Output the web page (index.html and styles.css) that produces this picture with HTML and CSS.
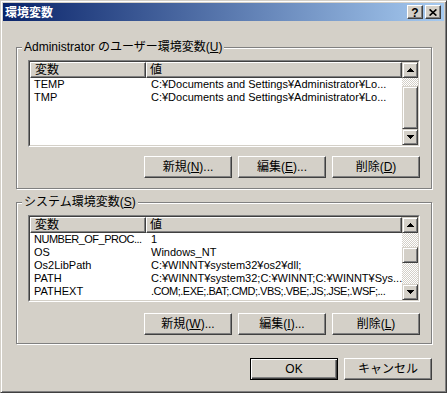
FILE: index.html
```html
<!DOCTYPE html>
<html lang="ja">
<head>
    <meta charset="UTF-8">
    <meta name="viewport" content="width=device-width, initial-scale=1.0">
    <title>環境変数</title>
    <link rel="stylesheet" href="styles.css">
</head>
<body>

    <div class="window">
        <div class="titlebar">
            <span class="title">環境変数</span>
            <div class="caption-buttons">
                <span class="cap-btn help">?</span>
                <span class="cap-btn">
                    <svg width="8" height="7" viewBox="0 0 8 7"><path d="M0.6 0.4l6.8 6.2M7.4 0.4l-6.8 6.2" stroke="#000" stroke-width="1.6" fill="none"/></svg>
                </span>
            </div>
        </div>

        <div class="content">
            <fieldset class="group">
                <legend>Administrator のユーザー環境変数(<u>U</u>)</legend>
                <div class="list">
                    <div class="list-inner">
                        <div class="list-main">
                            <div class="list-head">
                                <span class="head-cell name">変数</span>
                                <span class="head-cell value">値</span>
                            </div>
                            <div class="row"><span class="cell-name">TEMP</span><span class="cell-value">C:¥Documents and Settings¥Administrator¥Lo...</span></div>
                            <div class="row"><span class="cell-name">TMP</span><span class="cell-value">C:¥Documents and Settings¥Administrator¥Lo...</span></div>
                        </div>
                        <div class="scrollbar">
                            <span class="sb-btn">
                                <svg width="7" height="4" viewBox="0 0 7 4"><path d="M3 0h1v1h1v1h1v1h1v1H0V3h1V2h1V1h1z"/></svg>
                            </span>
                            <span class="sb-track user-top"></span>
                            <span class="sb-thumb user-thumb"></span>
                            <span class="sb-track fill"></span>
                            <span class="sb-btn">
                                <svg width="7" height="4" viewBox="0 0 7 4"><path d="M0 0h7v1H6v1H5v1H4v1H3V3H2V2H1V1H0z"/></svg>
                            </span>
                        </div>
                    </div>
                </div>
                <div class="actions">
                    <button class="btn">新規(<u>N</u>)...</button>
                    <button class="btn">編集(<u>E</u>)...</button>
                    <button class="btn">削除(<u>D</u>)</button>
                </div>
            </fieldset>

            <fieldset class="group system">
                <legend>システム環境変数(<u>S</u>)</legend>
                <div class="list">
                    <div class="list-inner">
                        <div class="list-main">
                            <div class="list-head">
                                <span class="head-cell name">変数</span>
                                <span class="head-cell value">値</span>
                            </div>
                            <div class="row"><span class="cell-name tight">NUMBER_OF_PROC...</span><span class="cell-value">1</span></div>
                            <div class="row"><span class="cell-name">OS</span><span class="cell-value">Windows_NT</span></div>
                            <div class="row"><span class="cell-name">Os2LibPath</span><span class="cell-value">C:¥WINNT¥system32¥os2¥dll;</span></div>
                            <div class="row"><span class="cell-name">PATH</span><span class="cell-value">C:¥WINNT¥system32;C:¥WINNT;C:¥WINNT¥Sys...</span></div>
                            <div class="row"><span class="cell-name">PATHEXT</span><span class="cell-value tight">.COM;.EXE;.BAT;.CMD;.VBS;.VBE;.JS;.JSE;.WSF;...</span></div>
                        </div>
                        <div class="scrollbar">
                            <span class="sb-btn">
                                <svg width="7" height="4" viewBox="0 0 7 4"><path d="M3 0h1v1h1v1h1v1h1v1H0V3h1V2h1V1h1z"/></svg>
                            </span>
                            <span class="sb-track system-top"></span>
                            <span class="sb-thumb system-thumb"></span>
                            <span class="sb-track fill"></span>
                            <span class="sb-btn">
                                <svg width="7" height="4" viewBox="0 0 7 4"><path d="M0 0h7v1H6v1H5v1H4v1H3V3H2V2H1V1H0z"/></svg>
                            </span>
                        </div>
                    </div>
                </div>
                <div class="actions">
                    <button class="btn">新規(<u>W</u>)...</button>
                    <button class="btn">編集(<u>I</u>)...</button>
                    <button class="btn">削除(<u>L</u>)</button>
                </div>
            </fieldset>

            <div class="footer">
                <button class="btn default">OK</button>
                <button class="btn">キャンセル</button>
            </div>
        </div>
    </div>

</body>
</html>
```

FILE: styles.css
```css
*{
    margin: 0;
    padding: 0;
    box-sizing: border-box;
}

html, body {
    width: 447px;
    height: 393px;
    overflow: hidden;
}
body {
    font-family: "Liberation Sans", "Noto Sans CJK JP", sans-serif;
    font-size: 12px;
    color: #000;
    background-color: #d4d0c8;
}

.window{
    width: 447px;
    height: 393px;
    border: 1px solid;
    border-color: #d4d0c8 #404040 #404040 #d4d0c8;
    box-shadow: inset 1px 1px #fff, inset -1px -1px #808080;
    padding: 2px;
    background-color: #d4d0c8;
    display: flex;
    flex-direction: column;
}

/* title bar */
.titlebar{
    height: 18px;
    background: linear-gradient(to right, #0a246a, #a6caf0);
    display: flex;
    align-items: center;
    justify-content: space-between;
    padding: 0 3px 0 2px;
}
.title{
    color: #fff;
    font-family: "Noto Sans CJK JP", sans-serif;
    font-weight: bold;
    font-size: 12px;
    line-height: 14px;
}
.caption-buttons{
    display: flex;
    gap: 2px;
}
.cap-btn{
    width: 16px;
    height: 14px;
    background-color: #d4d0c8;
    border: 1px solid;
    border-color: #fff #404040 #404040 #fff;
    box-shadow: inset -1px -1px #808080;
    display: flex;
    align-items: center;
    justify-content: center;
}
.cap-btn.help{
    font-weight: bold;
    font-size: 12px;
    line-height: 12px;
    padding-top: 1px;
}

/* content */
.content{
    padding: 20px 12px 0 13px;
}

.group{
    border: 1px solid #808080;
    box-shadow: inset 1px 1px #fff, 1px 1px #fff;
    padding: 6px 11px 10px 11px;
    min-width: 0;
}
.group legend{
    padding: 0 2px;
    margin-left: -6px;
    line-height: 13px;
    background-color: #d4d0c8;
}
.group.system{
    margin-top: 7px;
    padding-bottom: 8px;
}
.group.system .actions{
    margin-top: 11px;
}

/* list view */
.list{
    height: 87px;
    border: 1px solid;
    border-color: #808080 #fff #fff #808080;
}
.list-inner{
    height: 100%;
    border: 1px solid;
    border-color: #404040 #d4d0c8 #d4d0c8 #404040;
    background-color: #fff;
    display: flex;
}
.list-main{
    flex: 1;
    min-width: 0;
    overflow: hidden;
}
.list-head{
    display: flex;
    height: 16px;
}
.head-cell{
    background-color: #d4d0c8;
    border: 1px solid;
    border-color: #fff #404040 #404040 #fff;
    box-shadow: inset -1px -1px #808080;
    line-height: 14px;
    white-space: nowrap;
}
.head-cell.name{
    width: 116px;
    padding-left: 4px;
}
.head-cell.value{
    flex: 1;
    padding-left: 3px;
}
.row{
    display: flex;
    height: 13px;
    line-height: 13px;
    font-size: 11px;
    white-space: nowrap;
}
.cell-name{
    width: 116px;
    flex-shrink: 0;
    padding-left: 4px;
}
.cell-value{
    padding-left: 5px;
}
.tight{
    letter-spacing: -0.5px;
}

/* scrollbar */
.scrollbar{
    width: 16px;
    flex-shrink: 0;
    display: flex;
    flex-direction: column;
    background: repeating-conic-gradient(#fff 0 25%, #d4d0c8 0 50%) 0 0 / 2px 2px;
}
.sb-btn, .sb-thumb{
    background-color: #d4d0c8;
    border: 1px solid;
    border-color: #d4d0c8 #404040 #404040 #d4d0c8;
    box-shadow: inset 1px 1px #fff, inset -1px -1px #808080;
}
.sb-btn{
    height: 16px;
    flex-shrink: 0;
    display: flex;
    align-items: center;
    justify-content: center;
}
.sb-track.fill{
    flex: 1;
}
.user-top{
    height: 8px;
}
.user-thumb{
    height: 43px;
}
.system-top{
    height: 14px;
}
.system-thumb{
    height: 16px;
}

/* buttons */
.actions, .footer{
    display: flex;
    justify-content: flex-end;
    gap: 6px;
    margin-top: 9px;
}
.footer{
    margin-top: 14px;
}
.btn{
    width: 88px;
    height: 22px;
    font: inherit;
    color: #000;
    background-color: #d4d0c8;
    border: 1px solid;
    border-color: #fff #404040 #404040 #fff;
    box-shadow: inset -1px -1px #808080;
    display: flex;
    align-items: center;
    justify-content: center;
    line-height: 14px;
}
.btn.default{
    border: 1px solid #000;
    box-shadow: inset 1px 1px #fff, inset -1px -1px #404040, inset -2px -2px #808080;
}
```
